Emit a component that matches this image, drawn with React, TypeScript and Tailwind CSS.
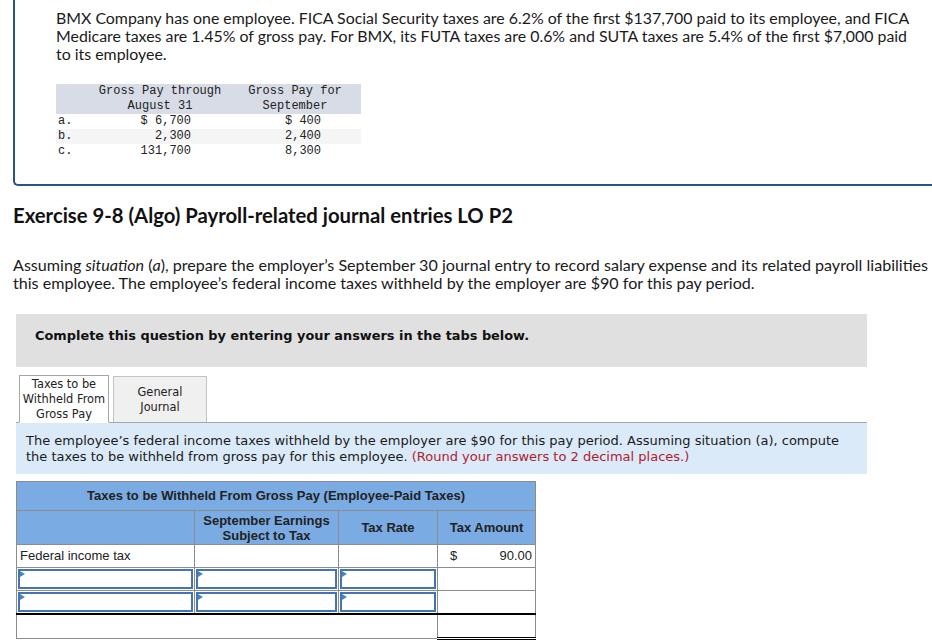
import React from "react";

const grossRows = [
  { label: "a.", aug: "$ 6,700", sep: "$ 400", shade: false },
  { label: "b.", aug: "2,300", sep: "2,400", shade: true },
  { label: "c.", aug: "131,700", sep: "8,300", shade: false },
];

function InputCell() {
  return (
    <td className="border border-[#8c8c8c] p-0">
      <div className="relative h-[20px] m-[1px] border-2 border-[#4474b3] bg-white">
        <span className="absolute left-0 top-0 w-0 h-0 border-y-[3px] border-y-transparent border-l-[5px] border-l-[#4a82c7]" />
      </div>
    </td>
  );
}

export default function App() {
  return (
    <div className="w-[932px] h-[644px] overflow-hidden bg-white text-[#1a1a1a]">
      {/* problem statement box */}
      <div className="ml-[13px] w-[960px] border-l-2 border-b-2 border-[#2b5283] rounded-bl-[5px] pl-[41px] pt-[9px] pb-[25px]">
        <p className="font-['Lato',sans-serif] text-[15.9px] leading-[18px] whitespace-nowrap">
          BMX Company has one employee. FICA Social Security taxes are 6.2% of the first $137,700 paid to its employee, and FICA
          <br />
          Medicare taxes are 1.45% of gross pay. For BMX, its FUTA taxes are 0.6% and SUTA taxes are 5.4% of the first $7,000 paid
          <br />
          to its employee.
        </p>
        <table className="mt-[21px] font-['Liberation_Mono',monospace] text-[12px] leading-[15px] text-[#222] border-collapse w-[305px]">
          <thead>
            <tr className="bg-[#d8dce6]">
              <th className="w-[35px] font-normal"></th>
              <th className="w-[138px] font-normal text-center">
                Gross Pay through
                <br />
                August 31
              </th>
              <th className="font-normal text-center">
                Gross Pay for
                <br />
                September
              </th>
            </tr>
          </thead>
          <tbody>
            {grossRows.map((r) => (
              <tr key={r.label} className={r.shade ? "bg-[#f5f5f5]" : ""}>
                <td className="pl-[2px]">{r.label}</td>
                <td className="text-right pr-[38px]">{r.aug}</td>
                <td className="text-right pr-[40px]">{r.sep}</td>
              </tr>
            ))}
          </tbody>
        </table>
      </div>

      <h2 className="ml-[13px] mt-[17px] font-['Lato',sans-serif] font-bold text-[20.3px] leading-[24px] text-[#111]">
        Exercise 9-8 (Algo) Payroll-related journal entries LO P2
      </h2>

      <p className="ml-[13px] mt-[29px] font-['Lato',sans-serif] text-[16.1px] leading-[18px] whitespace-nowrap">
        Assuming <i>situation</i> (<i>a</i>), prepare the employer’s September 30 journal entry to record salary expense and its related payroll liabilities for
        <br />
        this employee. The employee’s federal income taxes withheld by the employer are $90 for this pay period.
      </p>

      <div className="ml-[16px] w-[851px] mt-[22px]">
        <div className="h-[53px] bg-[#e0e0e0] pl-[19px] pt-[14px] font-['DejaVu_Sans',sans-serif] font-bold text-[12.9px] leading-[16px] text-[#111]">
          Complete this question by entering your answers in the tabs below.
        </div>

        {/* tabs */}
        <div className="mt-[8px] flex items-end gap-[4px] pl-[3px] border-b border-[#a6a6a6] font-['DejaVu_Sans',sans-serif] text-[11.4px] leading-[15px] text-[#222] whitespace-nowrap">
          <div className="w-[90px] h-[48px] -mb-px bg-white border border-[#a6a6a6] border-b-white flex items-center justify-center text-center">
            Taxes to be
            <br />
            Withheld From
            <br />
            Gross Pay
          </div>
          <div className="w-[94px] h-[46px] bg-[#f0f0f0] border border-[#c4c4c4] border-b-0 flex items-center justify-center text-center">
            General
            <br />
            Journal
          </div>
        </div>

        <div className="h-[51px] bg-[#dbeaf8] pl-[10px] pt-[10px] font-['DejaVu_Sans',sans-serif] text-[13px] leading-[16px] text-[#1a1a1a] whitespace-nowrap">
          The employee’s federal income taxes withheld by the employer are $90 for this pay period. Assuming situation (a), compute
          <br />
          the taxes to be withheld from gross pay for this employee.{" "}
          <span className="text-[#b01c2e]">(Round your answers to 2 decimal places.)</span>
        </div>
      </div>

      {/* answer table */}
      <table className="ml-[16px] mt-[7px] border-collapse font-['Liberation_Sans',Arial,sans-serif] text-[13px] text-[#222] table-fixed w-[519px]">
        <colgroup>
          <col className="w-[178px]" />
          <col className="w-[144px]" />
          <col className="w-[99px]" />
          <col className="w-[98px]" />
        </colgroup>
        <thead>
          <tr className="bg-[#7aabe2] h-[29px]">
            <th colSpan={4} className="border border-[#8c8c8c] font-bold text-center">
              Taxes to be Withheld From Gross Pay (Employee-Paid Taxes)
            </th>
          </tr>
          <tr className="bg-[#7aabe2] h-[34px] leading-[15px]">
            <th className="border border-[#8c8c8c]"></th>
            <th className="border border-[#8c8c8c] font-bold text-center">
              September Earnings
              <br />
              Subject to Tax
            </th>
            <th className="border border-[#8c8c8c] font-bold text-center">Tax Rate</th>
            <th className="border border-[#8c8c8c] font-bold text-center">Tax Amount</th>
          </tr>
        </thead>
        <tbody>
          <tr className="h-[23px]">
            <td className="border border-[#8c8c8c] pl-[3px]">Federal income tax</td>
            <td className="border border-[#8c8c8c]"></td>
            <td className="border border-[#8c8c8c]"></td>
            <td className="border border-[#8c8c8c] px-[3px]">
              <div className="flex justify-between">
                <span className="pl-[9px]">$</span>
                <span>90.00</span>
              </div>
            </td>
          </tr>
          <tr>
            <InputCell />
            <InputCell />
            <InputCell />
            <td className="border border-[#8c8c8c]"></td>
          </tr>
          <tr className="border-b-2 border-b-black">
            <InputCell />
            <InputCell />
            <InputCell />
            <td className="border border-[#8c8c8c] border-b-2 border-b-black"></td>
          </tr>
          <tr className="h-[24px]">
            <td colSpan={3} className="border border-[#8c8c8c]"></td>
            <td className="border border-[#8c8c8c] border-b-[3px] border-b-black border-double"></td>
          </tr>
        </tbody>
      </table>
    </div>
  );
}
